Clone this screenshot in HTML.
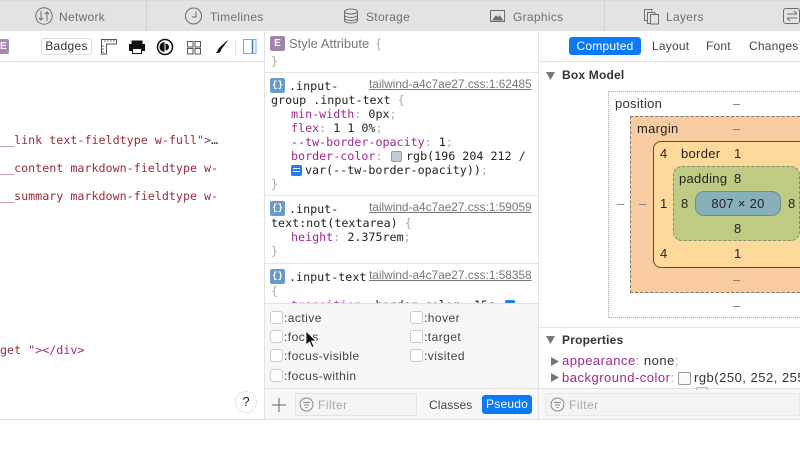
<!DOCTYPE html>
<html><head><meta charset="utf-8"><style>
html,body{margin:0;padding:0;width:800px;height:450px;overflow:hidden;background:#fff;font-family:"Liberation Sans",sans-serif;color:#222}
.a{position:absolute;white-space:pre;line-height:14px}
.m{font-family:"DejaVu Sans Mono",monospace;font-size:11.7px;line-height:14px}
.b{position:absolute}
.r{color:#9b2c3c}
.p{color:#a3268f}
.g{color:#aaa}
.u{color:#777;text-decoration:underline;font-size:11.85px;font-family:"Liberation Sans",sans-serif}
.tab{color:#6e6e6e;font-size:12px;letter-spacing:.3px}
.cb{position:absolute;width:11px;height:11px;border:1px solid #ccc;border-radius:3px;background:#fff}
.ic{position:absolute;width:15px;height:15px;background:#6a9ac9;border-radius:2px;color:#fff;font:bold 9px/15px "Liberation Mono",monospace;text-align:center}
.d{font-size:13px;color:#222;letter-spacing:.3px}
.ps{font-size:12px;color:#444;letter-spacing:.45px}
.pr{font-size:13px;letter-spacing:.5px;color:#333}
</style></head><body>
<div style="position:absolute;left:0;top:0;width:800px;height:450px;overflow:hidden">

<!-- tab bar -->
<div class="b" style="left:0;top:0;width:800px;height:31px;background:#e3e3e3;border-top:1px solid #dadada;box-sizing:border-box"></div>
<div class="b" style="left:146px;top:0;width:1px;height:31px;background:#d4d4d4"></div>
<div class="b" style="left:604px;top:0;width:1px;height:31px;background:#d4d4d4"></div>

<svg class="b" style="left:0;top:0" width="800" height="32" fill="none" stroke="#6e6e6e" stroke-width="1">
<circle cx="44" cy="16" r="8.200"/><path d="M41 11v9M38.800 17.800 41 20l2.200-2.200M47 21v-9M44.800 14.200 47 12l2.200 2.200"/>
<circle cx="193.500" cy="16" r="8"/><path d="M196 11.500v5.500h-4"/>
<ellipse cx="351" cy="11.500" rx="6.500" ry="2.500"/><path d="M344.500 11.500v9c0 1.500 3 2.500 6.500 2.500s6.500-1 6.500-2.500v-9M344.500 15c0 1.500 3 2.500 6.500 2.500s6.500-1 6.500-2.500M344.500 18c0 1.500 3 2.500 6.500 2.500s6.500-1 6.500-2.500"/>
<rect x="490.500" y="10.500" width="14" height="11"/><path d="M493 20l3-4 2 2 1.500-2 3 4z" fill="#6e6e6e"/>
<path d="M648 20.500h-3.500v-11h7.500v2M651 23.500h-3.500v-11h7.500v2"/><rect x="650.500" y="14.500" width="8" height="9.500" fill="#e3e3e3"/>
<rect x="783.500" y="8.500" width="16" height="15" rx="2.500"/><path d="M787 14h10M794 11l3 3M797 18h-10M790 21l-3-3"/>
</svg>
<div class="a tab" style="left:59px;top:10px">Network</div>
<div class="a tab" style="left:210px;top:10px">Timelines</div>
<div class="a tab" style="left:366px;top:10px">Storage</div>
<div class="a tab" style="left:513px;top:10px">Graphics</div>
<div class="a tab" style="left:666px;top:10px">Layers</div>

<!-- sub toolbars -->
<div class="b" style="left:0;top:61px;width:264px;height:1px;background:#e2e2e2"></div>
<div class="b" style="left:539px;top:61px;width:261px;height:1px;background:#e2e2e2"></div>
<div class="b" style="left:264px;top:31px;width:1px;height:389px;background:#e2e2e2"></div>
<div class="b" style="left:538px;top:31px;width:1px;height:389px;background:#e2e2e2"></div>
<div class="b" style="left:0;top:419px;width:800px;height:1px;background:#e2e2e2"></div>

<!-- left toolbar -->
<div class="b" style="left:0;top:39px;width:9px;height:15px;background:#a888b4;color:#fff;font:bold 10px/15px 'Liberation Sans',sans-serif;text-align:right;padding-right:3.500px;border-radius:0 2px 2px 0;box-sizing:border-box;overflow:hidden">E</div>
<div class="a" style="left:41px;top:38px;width:49px;height:15px;border:1px solid #ddd;border-radius:3px;text-align:center;font-size:12px;line-height:15px;color:#333;letter-spacing:.3px">Badges</div>
<svg class="b" style="left:100px;top:38px" width="160" height="18" fill="none" stroke="#555" stroke-width="1">
<path d="M1.500 1.500h15v4.500h-10v10h-5z"/><path d="M5 2v2M8 2v2M11 2v2M14 2v2M2 8h2M2 11h2M2 14h2" stroke="#777"/>
<path d="M32 3h10v3H32z" fill="#111" stroke="#111"/><path d="M29.500 6.500h15v6h-15z" fill="#111" stroke="#111"/><rect x="32.500" y="10.500" width="9" height="5" fill="#fff" stroke="#111"/>
<circle cx="65" cy="9" r="7.500" stroke="#111" stroke-width="1.500"/><path d="M64.500 4a5 5 0 0 0 0 10z" fill="#111" stroke="none"/><path d="M65.500 5.500a3.500 3.500 0 0 1 0 7z" fill="#111" stroke="none"/>
<path d="M87.500 3.500h5.500v5.500h-5.500zM95 3.500h5.500v5.500H95zM87.500 10.500h5.500V16h-5.500zM95 10.500h5.500V16H95z"/>
<path d="M127.500 2.500 119 10.500l1.500 1.500z" fill="#111" stroke="#111" stroke-width=".6"/><path d="M119 10.500c-1.500.5-1 3-3.500 4.500 3 .5 5.500-.5 5.500-3z" fill="#111" stroke="none"/>
<path d="M135.500 1v16" stroke="#e2e2e2"/>
<rect x="143.500" y="1.500" width="12.500" height="14" fill="#fff" stroke="#7fa8de"/><path d="M152.500 2v13" stroke="#1f7ff0" stroke-width="1.500"/>
</svg>

<!-- left content -->
<div class="a m r" style="left:0;top:133px">__link text-fieldtype w-full<span style="color:#a3268f">"&gt;</span><span style="color:#333">…</span></div>
<div class="a m r" style="left:0;top:161px">__content markdown-fieldtype w-</div>
<div class="a m r" style="left:0;top:189px">__summary markdown-fieldtype w-</div>
<div class="a m" style="left:0;top:343px"><span class="r">get </span><span class="p">"&gt;&lt;/div&gt;</span></div>
<div class="a" style="left:235px;top:391px;width:22px;height:22px;border:1px solid #e4e4e4;box-sizing:border-box;border-radius:50%;text-align:center;font-size:13px;line-height:20px;color:#222">?</div>

<!-- middle column -->
<div class="b" style="left:270px;top:36px;width:15px;height:15px;background:#a183ad;border-radius:2px;color:#fff;font:bold 10px/15px 'Liberation Sans',sans-serif;text-align:center">E</div>
<div class="a" style="left:289px;top:37px;font-size:13px;color:#777">Style Attribute <span style="color:#aaa;font-size:13px"> {</span></div>
<div class="a m g" style="left:271px;top:54px">}</div>
<div class="b" style="left:265px;top:72px;width:273px;height:1px;background:#e5e5e5"></div>

<div class="ic" style="left:270px;top:78px">{}</div>
<div class="a m" style="left:289px;top:79px">.input-</div>
<div class="a u" style="left:369px;top:77px">tailwind-a4c7ae27.css:1:62485</div>
<div class="a m" style="left:271px;top:93px">group .input-text <span class="g">{</span></div>
<div class="a m" style="left:291px;top:107px"><span class="p">min-width</span><span class="g">:</span> 0px<span class="g">;</span></div>
<div class="a m" style="left:291px;top:121px"><span class="p">flex</span><span class="g">:</span> 1 1 0%<span class="g">;</span></div>
<div class="a m" style="left:291px;top:135px"><span class="p">--tw-border-opacity</span><span class="g">:</span> 1<span class="g">;</span></div>
<div class="a m" style="left:291px;top:149px"><span class="p">border-color</span><span class="g">:</span></div>
<div class="b" style="left:391px;top:151px;width:9px;height:9px;background:#c4ccd4;border:1px solid #999;border-radius:2px"></div>
<div class="a m" style="left:406px;top:149px">rgb(196 204 212 /</div>
<div class="b" style="left:291px;top:165px;width:11px;height:11px;background:#1f7ff0;border-radius:2px"><div style="position:absolute;left:2px;right:2px;top:3px;height:1px;background:#fff"></div><div style="position:absolute;left:2px;right:2px;top:6px;height:1px;background:#fff"></div></div>
<div class="a m" style="left:305px;top:163px">var(--tw-border-opacity))<span class="g">;</span></div>
<div class="a m g" style="left:271px;top:177px">}</div>
<div class="b" style="left:265px;top:195px;width:273px;height:1px;background:#e5e5e5"></div>

<div class="ic" style="left:270px;top:201px">{}</div>
<div class="a m" style="left:289px;top:202px">.input-</div>
<div class="a u" style="left:369px;top:200px">tailwind-a4c7ae27.css:1:59059</div>
<div class="a m" style="left:271px;top:216px">text:not(textarea) <span class="g">{</span></div>
<div class="a m" style="left:291px;top:230px"><span class="p">height</span><span class="g">:</span> 2.375rem<span class="g">;</span></div>
<div class="a m g" style="left:271px;top:244px">}</div>
<div class="b" style="left:265px;top:263px;width:273px;height:1px;background:#e5e5e5"></div>

<div class="ic" style="left:270px;top:269px">{}</div>
<div class="a m" style="left:289px;top:270px">.input-text</div>
<div class="a u" style="left:369px;top:268px">tailwind-a4c7ae27.css:1:58358</div>
<div class="a m g" style="left:271px;top:284px">{</div>
<div class="a m" style="left:291px;top:298px"><span class="p">transition</span><span class="g">:</span> border-color .15s</div>
<div class="b" style="left:505px;top:300px;width:10px;height:10px;background:#1f7ff0;border-radius:2px"></div>

<!-- pseudo panel -->
<div class="b" style="left:265px;top:303px;width:273px;height:85px;background:#f7f7f7;border-top:1px solid #e2e2e2;box-sizing:border-box"></div>
<div class="cb" style="left:270px;top:311px"></div><div class="a ps" style="left:284px;top:311px">:active</div>
<div class="cb" style="left:410px;top:311px"></div><div class="a ps" style="left:424px;top:311px">:hover</div>
<div class="cb" style="left:270px;top:330px"></div><div class="a ps" style="left:284px;top:330px">:focus</div>
<div class="cb" style="left:410px;top:330px"></div><div class="a ps" style="left:424px;top:330px">:target</div>
<div class="cb" style="left:270px;top:349px"></div><div class="a ps" style="left:284px;top:349px">:focus-visible</div>
<div class="cb" style="left:410px;top:349px"></div><div class="a ps" style="left:424px;top:349px">:visited</div>
<div class="cb" style="left:270px;top:369px"></div><div class="a ps" style="left:284px;top:369px">:focus-within</div>
<svg class="b" style="left:304px;top:330px" width="14" height="20"><path d="M2 1v14l3.500-3 2.500 5.500 2-1-2.500-5.500h4.500z" fill="#111" stroke="#fff" stroke-width=".8"/></svg>

<!-- bottom filter middle -->
<div class="b" style="left:265px;top:388px;width:273px;height:31px;background:#f7f7f7;border-top:1px solid #e2e2e2;box-sizing:border-box"></div>
<svg class="b" style="left:270px;top:396px" width="18" height="18" stroke="#666" fill="none"><path d="M9 2v14M2 9h14"/></svg>
<div class="b" style="left:295px;top:393px;width:122px;height:23px;background:#f4f4f4;border:1px solid #e2e2e2;border-radius:2px;box-sizing:border-box"></div>
<svg class="b" style="left:299px;top:397px" width="16" height="16" fill="none" stroke="#888"><circle cx="7.500" cy="7.500" r="6.500"/><path d="M4 5.500h7M5 8h5M6.500 10.500h2"/></svg>
<div class="a" style="left:318px;top:398px;font-size:12px;color:#aaa;letter-spacing:.5px">Filter</div>
<div class="a" style="left:429px;top:398px;font-size:12px;color:#444;letter-spacing:.1px">Classes</div>
<div class="a" style="left:482px;top:395px;width:50px;height:19px;background:#0a7bf5;border-radius:3px;color:#fff;text-align:center;font-size:12px;line-height:19px;letter-spacing:.2px">Pseudo</div>

<!-- right toolbar -->
<div class="a" style="left:569px;top:37px;width:72px;height:18px;background:#0a7bf5;border-radius:3px;color:#fff;text-align:center;font-size:12px;line-height:18px;letter-spacing:.2px">Computed</div>
<div class="a" style="left:652px;top:39px;font-size:12px;color:#444;letter-spacing:.2px">Layout</div>
<div class="a" style="left:706px;top:39px;font-size:12px;color:#444;letter-spacing:.2px">Font</div>
<div class="a" style="left:749px;top:39px;font-size:12px;color:#444;letter-spacing:.2px">Changes</div>

<svg class="b" style="left:545px;top:71px" width="12" height="10"><path d="M1 1h9l-4.500 8z" fill="#777"/></svg>
<div class="a" style="left:562px;top:68px;font-size:12px;font-weight:bold;color:#333;letter-spacing:.2px">Box Model</div>

<!-- box model -->
<div class="b" style="left:608px;top:91px;width:210px;height:227px;border:1px dotted #aaa;box-sizing:border-box"></div>
<div class="a d" style="left:615px;top:97px;color:#333">position</div>
<div class="a d" style="left:733px;top:97px;color:#777">–</div>
<div class="b" style="left:630px;top:116px;width:190px;height:177px;background:#f8cba0;border:1px dashed #777;box-sizing:border-box"></div>
<div class="a d" style="left:637px;top:122px">margin</div>
<div class="a d" style="left:733px;top:122px;color:#777">–</div>
<div class="b" style="left:653px;top:141px;width:170px;height:127px;background:#fdd99b;border:1px solid #5a4a30;border-radius:8px;box-sizing:border-box"></div>
<div class="a d" style="left:660px;top:147px">4</div>
<div class="a d" style="left:681px;top:147px">border</div>
<div class="a d" style="left:734px;top:147px">1</div>
<div class="b" style="left:673px;top:166px;width:127px;height:75px;background:#bfcb83;border:1px dashed #8a8a6a;border-radius:9px;box-sizing:border-box"></div>
<div class="a d" style="left:679px;top:172px">padding</div>
<div class="a d" style="left:734px;top:172px">8</div>
<div class="b" style="left:695px;top:191px;width:86px;height:25px;background:#88b0bb;border:1px solid #6e8c96;border-radius:9px;box-sizing:border-box"></div>
<div class="a d" style="left:695px;top:197px;width:86px;text-align:center;color:#223">807 × 20</div>
<div class="a d" style="left:681px;top:197px">8</div>
<div class="a d" style="left:788px;top:197px">8</div>
<div class="a d" style="left:660px;top:197px">1</div>
<div class="a d" style="left:617px;top:197px;color:#777">–</div>
<div class="a d" style="left:639px;top:197px;color:#777">–</div>
<div class="a d" style="left:734px;top:222px">8</div>
<div class="a d" style="left:660px;top:247px">4</div>
<div class="a d" style="left:734px;top:247px">1</div>
<div class="a d" style="left:733px;top:273px;color:#777">–</div>
<div class="a d" style="left:733px;top:299px;color:#777">–</div>

<div class="b" style="left:539px;top:327px;width:261px;height:1px;background:#e5e5e5"></div>
<svg class="b" style="left:545px;top:335px" width="12" height="10"><path d="M1 1h9l-4.500 8z" fill="#777"/></svg>
<div class="a" style="left:562px;top:333px;font-size:12px;font-weight:bold;color:#333;letter-spacing:.2px">Properties</div>
<svg class="b" style="left:550px;top:356px" width="10" height="30"><path d="M1 1l8 4.500-8 4.500zM1 17l8 4.500-8 4.500z" fill="#777"/></svg>
<div class="a pr" style="left:562px;top:354px"><span class="p">appearance</span><span class="g">:</span> none<span class="g">;</span></div>
<div class="a pr" style="left:562px;top:371px"><span class="p">background-color</span><span class="g">:</span></div>
<div class="b" style="left:678px;top:372px;width:11px;height:11px;background:#fafcff;border:1px solid #999;border-radius:2px"></div>
<div class="a pr" style="left:694px;top:371px">rgb(250, 252, 255</div>

<!-- right bottom filter -->
<div class="b" style="left:539px;top:388px;width:261px;height:31px;background:#f7f7f7;border-top:1px solid #e2e2e2;box-sizing:border-box"></div>
<div class="b" style="left:696px;top:387px;width:12px;height:3px;border:1px solid #bbb;border-bottom:0;border-radius:2px 2px 0 0;box-sizing:border-box"></div>
<div class="b" style="left:545px;top:393px;width:255px;height:23px;background:#f4f4f4;border:1px solid #e8e8e8;border-radius:2px;box-sizing:border-box"></div>
<svg class="b" style="left:550px;top:397px" width="16" height="16" fill="none" stroke="#888"><circle cx="7.500" cy="7.500" r="6.500"/><path d="M4 5.500h7M5 8h5M6.500 10.500h2"/></svg>
<div class="a" style="left:569px;top:398px;font-size:12px;color:#aaa;letter-spacing:.5px">Filter</div>
</div>
</body></html>
